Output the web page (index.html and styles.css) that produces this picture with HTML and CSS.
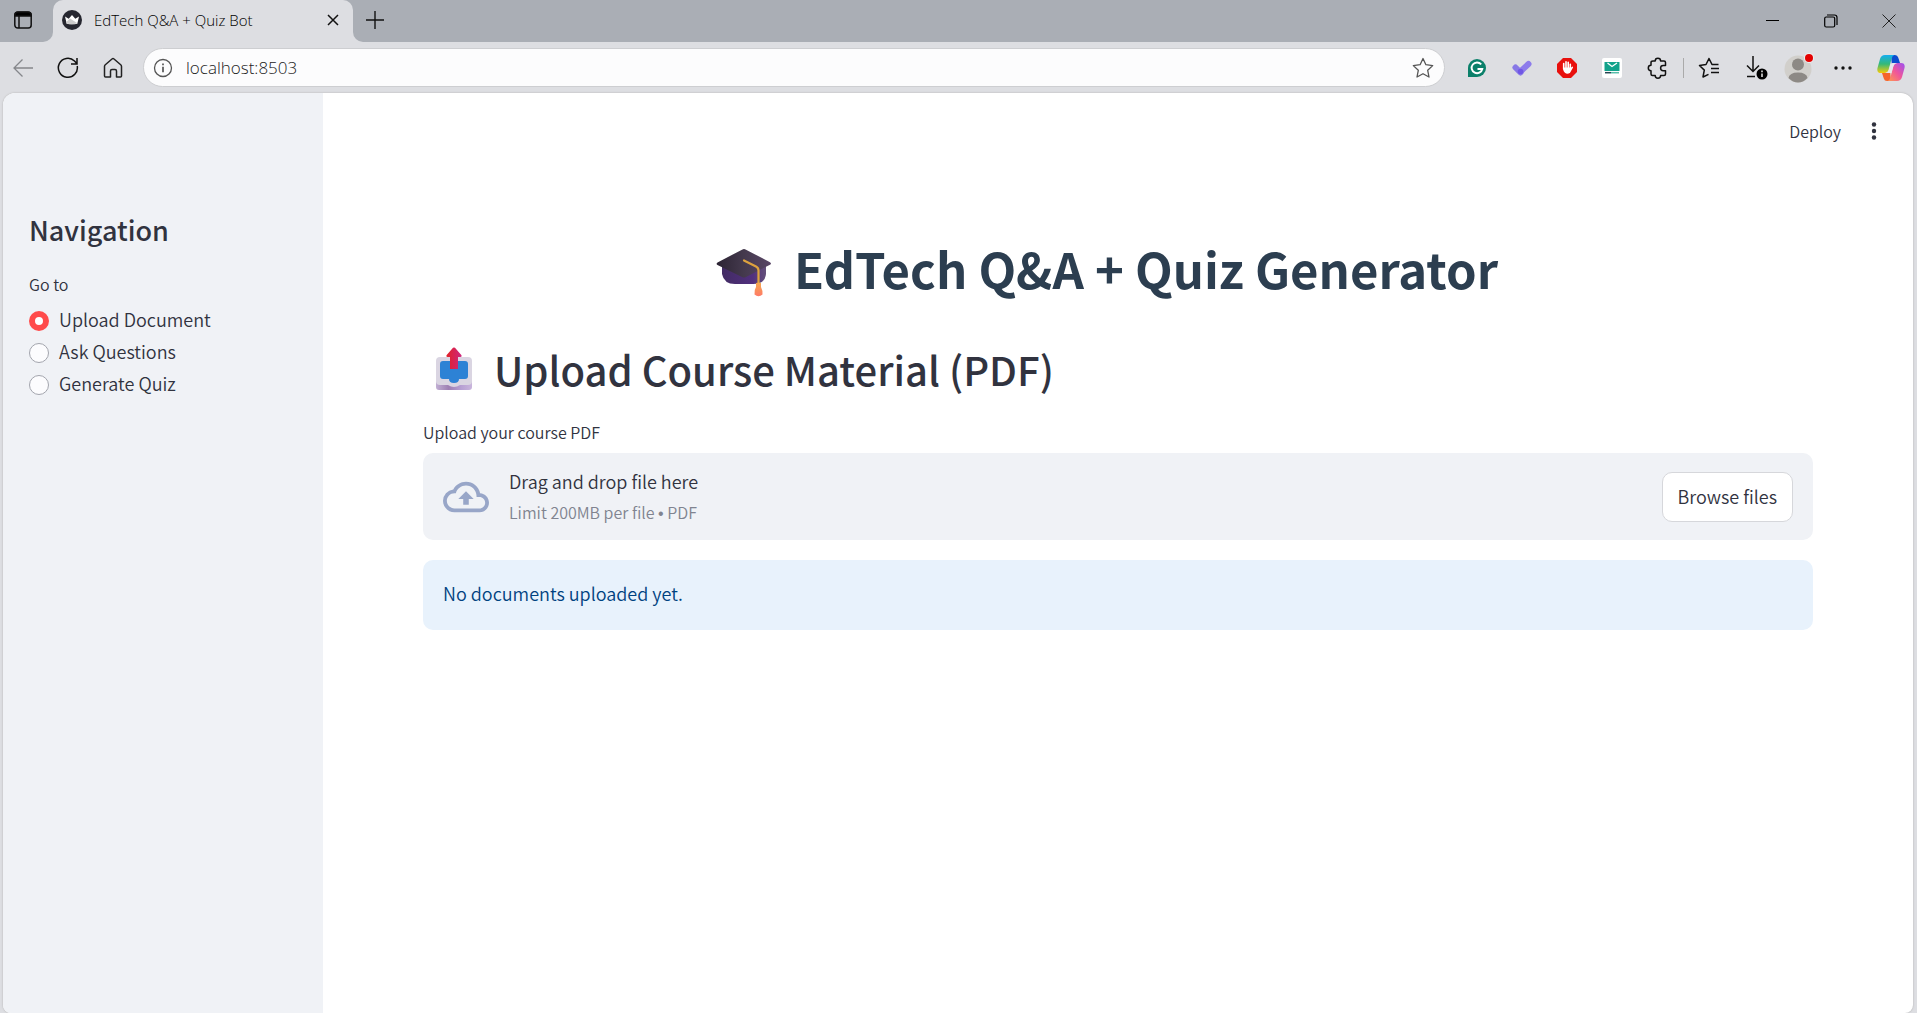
FILE: index.html
```html
<!DOCTYPE html>
<html lang="en">
<head>
<meta charset="utf-8">
<title>EdTech Q&amp;A + Quiz Bot</title>
<link rel="stylesheet" href="styles.css">
</head>
<body>
<div class="browser">
  <div class="tabstrip">
    <button class="tab-actions" aria-label="Tab actions">
      <svg width="20" height="20" viewBox="0 0 20 20" fill="none" stroke="#111" stroke-width="1.5"><rect x="1.8" y="2.3" width="16.400" height="15.700" rx="3"/><path d="M6 6v12"/><path d="M2 6V5a3 3 0 0 1 3-3h10a3 3 0 0 1 3 3v1z" fill="#000"/></svg>
    </button>
    <div class="tab">
      <svg class="favicon" width="20" height="20" viewBox="0 0 20 20"><circle cx="10" cy="10" r="10" fill="#262730"/><path d="M3 6.500l3.700 2.200L10 5l3.300 3.700L17 6.500l-1.700 7.200q-5.300 1.300-10.600 0z" fill="#fff"/><path d="M4.300 12L8 8.500l7.500 4.800q-5 1.500-10.800.4z" fill="#ccc"/></svg>
      <span class="tab-title">EdTech Q&amp;A + Quiz Bot</span>
      <button class="icon-btn" aria-label="Close tab"><svg width="12" height="12" viewBox="0 0 12 12" stroke="#111" stroke-width="1.5"><path d="M1 1l10 10M11 1L1 11"/></svg></button>
    </div>
    <button class="icon-btn new-tab" aria-label="New tab"><svg width="18" height="18" viewBox="0 0 18 18" stroke="#111" stroke-width="1.400"><path d="M9 0v18M0 9h18"/></svg></button>
    <div class="window-controls">
      <button class="icon-btn" aria-label="Minimize"><svg width="14" height="14" viewBox="0 0 14 14" stroke="#000"><path d="M0 6.500h13"/></svg></button>
      <button class="icon-btn" aria-label="Restore"><svg width="14" height="14" viewBox="0 0 14 14" fill="none" stroke="#000" stroke-width="1.200"><rect x=".7" y="3" width="10" height="10" rx="1.500"/><path d="M3 1h7.500Q13 1 13 3.500V11"/></svg></button>
      <button class="icon-btn" aria-label="Close window"><svg width="14" height="14" viewBox="0 0 14 14" stroke="#222"><path d="M.5.500l13 13M13.500.500l-13 13"/></svg></button>
    </div>
  </div>

  <div class="toolbar">
    <div class="nav-buttons">
      <button class="icon-btn" aria-label="Back"><svg width="22" height="22" viewBox="0 0 22 22" fill="none" stroke="#85878b" stroke-width="1.300"><path d="M21 11H2M10.500 2.500L2 11l8.500 8.500"/></svg></button>
      <button class="icon-btn" aria-label="Refresh"><svg width="22" height="22" viewBox="0 0 22 22" fill="none" stroke="#111" stroke-width="1.500"><path d="M20.200 9A9.500 9.500 0 1 1 17.500 4l2.300 2.500M20 1v6h-6"/></svg></button>
      <button class="icon-btn" aria-label="Home"><svg width="22" height="22" viewBox="-1 0 22 22" fill="none" stroke="#222" stroke-width="1.500" stroke-linejoin="round"><path d="M1.500 9.500Q1.500 8.500 2.300 7.800L9 2q1-.8 2 0l6.700 5.800q.8.700.8 1.700V19q0 1-1 1h-4v-6q0-1.500-1.500-1.500H9Q7.500 12.500 7.500 14v6h-5q-1 0-1-1z"/></svg></button>
    </div>
    <div class="address">
      <svg width="20" height="20" viewBox="0 0 20 20"><circle cx="10" cy="10" r="8.500" fill="none" stroke="#555" stroke-width="1.300"/><path d="M10 8.800v5.500M10 5.500v1.800" stroke="#555" stroke-width="1.700"/></svg>
      <input class="address-input" type="text" aria-label="Address" value="localhost:8503">
      <button class="icon-btn" aria-label="Favorite this page"><svg width="22" height="22" viewBox="0 0 22 22" fill="none" stroke="#555" stroke-width="1.300" stroke-linejoin="round"><path d="M11 1.500l2.900 6.200 6.800.9-5 4.700 1.300 6.700-6-3.300L5 20l1.300-6.700-5-4.700 6.800-.9z"/></svg></button>
    </div>
    <div class="extensions">
      <button class="icon-btn" aria-label="Grammar checker"><svg width="20" height="20" viewBox="0 0 20 20"><path d="M1 19V10a9 9 0 1 1 9 9z" fill="#0b806a"/><path d="M14.200 6.400A5.400 5.400 0 1 0 15.300 11H10.500" fill="none" stroke="#fff" stroke-width="1.900"/></svg></button>
      <button class="icon-btn" aria-label="Tasks"><svg width="20" height="20" viewBox="0 0 20 20" stroke-linecap="round" stroke-width="6"><path d="M3.500 9.500l5 5" stroke="#8778e6"/><path d="M8.500 13.500L16.500 6" stroke="#8d7ceb"/><circle cx="8.500" cy="13.500" r="2.800" fill="#7057e5"/></svg></button>
      <button class="icon-btn" aria-label="Ad blocker"><svg width="20" height="20" viewBox="0 0 20 20"><path d="M6 0h8l6 6v8l-6 6H6l-6-6V6z" fill="#e8100d"/><path d="M6.700 11V5.600M9 10V3.800M11.200 10V4.300M13.300 11V6.300" stroke="#fff" stroke-width="1.600" stroke-linecap="round"/><path d="M6 9.500h8.200l1.200-1q1 .3.500 1.200l-3 5.300q-2.800 1.700-5-.2Q6 13 6 9.500z" fill="#fff"/></svg></button>
      <button class="icon-btn" aria-label="Temporary mail"><svg width="20" height="20" viewBox="0 0 20 20"><rect width="20" height="20" rx="2" fill="#fff"/><path d="M2.500 4h15v9h-15z" fill="#12a28b"/><path d="M5.500 5l4.500 3.500L15 5" fill="none" stroke="#fff" stroke-width="1.300"/><path d="M3 14.700h6" stroke="#264653" stroke-width="1.500"/><path d="M9 14.700h8" stroke="#58bdaa" stroke-width="1.500"/></svg></button>
      <button class="icon-btn" aria-label="Extensions"><svg width="22" height="22" viewBox="0 0 22 22" fill="none" stroke="#111" stroke-width="1.500" stroke-linejoin="round"><path d="M6 4h2.200a2.700 2.700 0 0 1 5.400 0H17q1.500 0 1.500 1.500V8.500h-2.300a2.600 2.600 0 0 0 0 5.200h2.300V17q0 1.500-1.500 1.500h-3.400a2.700 2.700 0 0 1-5.400 0H5.500Q4 18.500 4 17v-3.300a2.700 2.700 0 0 1 0-5.400V5.500Q4 4 6 4z"/></svg></button>
      <span class="separator"></span>
      <button class="icon-btn" aria-label="Favorites"><svg width="22" height="22" viewBox="0 0 22 22" fill="none" stroke="#111" stroke-width="1.500" stroke-linejoin="round"><path d="M20.500 7.500h-6.500L11 1.500 8 7.500l-6.500 1 4.800 4.600L5 20l5.500-2.600M13 11.500h8M13 15.500h8"/></svg></button>
      <button class="icon-btn" aria-label="Downloads"><svg width="24" height="26" viewBox="0 0 24 26" fill="none" stroke="#111" stroke-width="1.500"><path d="M8 1v15M2 10.500l6 6 6-6M2 21.500h8"/><circle cx="17" cy="19" r="5.500" fill="#000" stroke="none"/><path d="M17 18.500v3.500M17 15.500v1.700" stroke="#ddd" stroke-width="1.600"/></svg></button>
      <button class="icon-btn profile" aria-label="Profile"><svg width="30" height="30" viewBox="0 0 30 30"><circle cx="14" cy="16" r="13.500" fill="#d1cfcb"/><circle cx="14" cy="11.500" r="6" fill="#8d8985"/><path d="M4.500 25Q5.500 19.500 14 19.500t9.500 5.500Q19 29.500 14 29.500T4.500 25z" fill="#8d8985"/><circle cx="25" cy="5" r="5" fill="#eee"/><circle cx="25" cy="5" r="4" fill="#e30000"/></svg></button>
      <button class="icon-btn" aria-label="Settings and more"><svg width="18" height="6" viewBox="0 0 18 6" fill="#111"><circle cx="2" cy="3" r="1.700"/><circle cx="9" cy="3" r="1.700"/><circle cx="16" cy="3" r="1.700"/></svg></button>
      <button class="icon-btn" aria-label="Copilot"><svg width="28" height="26" viewBox="0 0 28 26"><defs><linearGradient id="ca" x1="0" y1="0" x2="0" y2="1"><stop offset="0" stop-color="#14aef0"/><stop offset=".5" stop-color="#35b979"/><stop offset="1" stop-color="#f5cc08"/></linearGradient><linearGradient id="cb" x1="1" y1="0" x2="0" y2="1"><stop offset="0" stop-color="#9b50f2"/><stop offset=".5" stop-color="#f0569a"/><stop offset="1" stop-color="#ff9b4d"/></linearGradient></defs><path d="M14 0h4q2.500 0 3.200 2.500L23 8h-4q-3 0-4 3z" fill="#0b4ccf"/><path d="M14 26h-4q-2.500 0-3.200-2.500L5 18h4q3 0 4-3z" fill="#f5642c"/><path d="M8 0h9.500q-2.300.7-3 4l-3 11q-1 3-4 3H4q-4.500 0-3.500-5L3 4q1.200-4 5-4z" fill="url(#ca)"/><path d="M20 26h-9.500q2.300-.7 3-4l3-11q1-3 4-3H24q4.500 0 3.500 5L25 22q-1.200 4-5 4z" fill="url(#cb)"/><path d="M15.500 8H20q-2.800.4-3.600 3l-2 7H8.500q2.500-.5 3.300-3l1.500-5Q14 8 15.500 8z" fill="#e8e6ec"/></svg></button>
    </div>
  </div>

  <div class="page">
    <aside class="sidebar">
      <h2 class="sidebar-title">Navigation</h2>
      <fieldset class="nav-group">
        <legend class="field-label">Go to</legend>
        <label class="nav-option"><input type="radio" name="nav" checked><span>Upload Document</span></label>
        <label class="nav-option"><input type="radio" name="nav"><span>Ask Questions</span></label>
        <label class="nav-option"><input type="radio" name="nav"><span>Generate Quiz</span></label>
      </fieldset>
    </aside>
    <main class="main">
      <header class="app-header">
        <button class="deploy">Deploy</button>
        <button class="icon-btn" aria-label="Main menu"><svg width="6" height="18" viewBox="0 0 6 18" fill="#31333f"><circle cx="3" cy="2.500" r="2.200"/><circle cx="3" cy="9" r="2.200"/><circle cx="3" cy="15.500" r="2.200"/></svg></button>
      </header>
      <div class="content">
        <h1 class="title">
          <svg width="56" height="50" viewBox="0 0 56 50"><defs><linearGradient id="board" x1="0" y1="0" x2="1" y2="0"><stop offset="0" stop-color="#2c2433"/><stop offset=".5" stop-color="#44394d"/><stop offset="1" stop-color="#5a4767"/></linearGradient><linearGradient id="cap" x1="0" y1="0" x2="1" y2="0"><stop offset="0" stop-color="#422b63"/><stop offset=".7" stop-color="#51307e"/><stop offset="1" stop-color="#65517a"/></linearGradient><linearGradient id="tassel" x1="0" y1="0" x2="0" y2="1"><stop offset="0" stop-color="#f4a94e"/><stop offset="1" stop-color="#ff7a68"/></linearGradient></defs><path d="M6 14h44v12q-1 10-13 10H19Q8 36 6 26z" fill="url(#cap)"/><path d="M26 1.700q2-1.200 4 0l24 12.500q2 1.300 0 2.600L30 29q-2 1-4 0L1.500 17q-1.800-1.300 0-2.600z" fill="url(#board)"/><path d="M28 12.500l12 6q2.500 1.300 2.500 4V37" fill="none" stroke="#dda23e" stroke-width="2.200" stroke-linecap="round"/><path d="M40 35q2.500-1 5 0v4q2 4 1.500 7.500-4 3.500-8 0Q38 42 40 39z" fill="url(#tassel)"/></svg>
          <span>EdTech Q&amp;A + Quiz Generator</span>
        </h1>
        <h2 class="section-title">
          <svg width="36" height="44" viewBox="0 0 36 44"><defs><linearGradient id="base" x1="0" y1="0" x2="1" y2="0"><stop offset="0" stop-color="#c1afd3"/><stop offset=".35" stop-color="#9e7fb3"/><stop offset=".7" stop-color="#b7a0d3"/><stop offset="1" stop-color="#c9b5dc"/></linearGradient><linearGradient id="arrow" x1="0" y1="0" x2="1" y2="0"><stop offset="0" stop-color="#e22127"/><stop offset="1" stop-color="#cd277f"/></linearGradient></defs><path d="M0 30h36v10q0 3-3 3H3q-3 0-3-3z" fill="url(#base)"/><rect y="10" width="36" height="28" rx="4" fill="#dad5e2"/><path d="M12 35h12v3q-6 4-12 0z" fill="#dad5e2"/><path d="M7 14h22q3 0 3 3v12q0 3-3 3h-6q0 4-5 4t-5-4H7q-3 0-3-3V17q0-3 3-3z" fill="#2d82d5"/><path d="M17 .8q1-.8 2 0l6.500 7.500q.7 1.400-1 1.700H22v12h-8V10h-2.500q-1.700-.3-1-1.700z" fill="url(#arrow)"/></svg>
          <span>Upload Course Material (PDF)</span>
        </h2>
        <p class="field-label">Upload your course PDF</p>
        <section class="dropzone">
          <svg width="46" height="46" viewBox="0 0 24 24" fill="#98a6c8"><path d="M19.350 10.040A7.490 7.490 0 0 0 12 4C9.110 4 6.600 5.640 5.350 8.040A5.994 5.994 0 0 0 0 14c0 3.310 2.690 6 6 6h13c2.760 0 5-2.240 5-5 0-2.640-2.050-4.780-4.650-4.960zM19 18H6c-2.210 0-4-1.790-4-4s1.790-4 4-4h.710C7.370 7.690 9.480 6 12 6c3.040 0 5.500 2.460 5.500 5.500v.5H19c1.660 0 3 1.340 3 3s-1.340 3-3 3zM8 13h2.550v3h2.900v-3H16l-4-4z"/></svg>
          <div class="drop-text">
            <span>Drag and drop file here</span>
            <small>Limit 200MB per file <span class="dot">•</span> PDF</small>
          </div>
          <button class="browse">Browse files</button>
        </section>
        <div class="notice" role="status">No documents uploaded yet.</div>
      </div>
    </main>
  </div>
</div>
</body>
</html>
```
FILE: styles.css
```css
* { box-sizing: border-box; }

body {
  margin: 0;
  background: #dddee2;
  color: #31333f;
  font-family: "Noto Sans CJK SC", "Noto Sans", sans-serif;
  font-size: 18px;
  font-weight: 350;
}

h1, h2, p { margin: 0; }

button {
  padding: 0;
  border: 0;
  background: none;
  color: inherit;
  font: inherit;
}

svg { display: block; flex: none; }

.browser {
  display: flex;
  flex-direction: column;
  min-height: 100vh;
}

.icon-btn {
  display: flex;
  align-items: center;
  justify-content: center;
}

/* Tab strip */
.tabstrip {
  display: flex;
  height: 42px;
  background: #dddee2;
}

.tab-actions {
  width: 53px;
  padding: 0 0 2px 13px;
  background: #aaaeb5;
  border-bottom-right-radius: 10px;
}

.tab {
  display: flex;
  align-items: center;
  gap: 12px;
  width: 300px;
  padding: 0 14px 2px 9px;
  background: linear-gradient(#aaaeb5, #aaaeb5) top / 100% 12px no-repeat;
  position: relative;
  isolation: isolate;
}

.tab::before {
  content: "";
  position: absolute;
  inset: 0;
  z-index: -1;
  border-radius: 10px 10px 0 0;
  background: #dddee2;
}

.tab-title {
  flex: 1;
  color: #000;
  font-family: "Open Sans", sans-serif;
  font-size: 15px;
}

.new-tab {
  padding: 0 0 3px 13px;
  background: #aaaeb5;
  border-bottom-left-radius: 10px;
}

.window-controls {
  display: flex;
  flex: 1;
  justify-content: flex-end;
  gap: 44px;
  padding-right: 21px;
  background: #aaaeb5;
}

/* Toolbar */
.toolbar {
  display: flex;
  align-items: center;
  height: 51px;
  padding: 0 12px 0 12px;
}

.nav-buttons {
  display: flex;
  gap: 23px;
  width: 131px;
}

.address {
  display: flex;
  flex: 1;
  align-items: center;
  gap: 13px;
  height: 39px;
  padding: 0 10px 0 9px;
  border: 1px solid #cdced1;
  border-radius: 20px;
  background: #fcfcfd;
}

.address-input {
  flex: 1;
  min-width: 0;
  padding: 0;
  border: 0;
  outline: 0;
  background: none;
  color: #222;
  font-family: "Open Sans", sans-serif;
  font-size: 17px;
  font-weight: 350;
}

.extensions {
  display: flex;
  align-items: center;
  gap: 25px;
  padding-left: 22px;
}

.separator {
  width: 1px;
  height: 20px;
  margin: 0 -11px;
  background: #aaa;
}

.profile { margin: 0 -5px 0 -10px; }

/* App */
.page {
  display: flex;
  flex: 1;
  margin: 0 4px 0 3px;
  overflow: hidden;
  border-radius: 12px 12px 8px 8px;
  background: #fff;
  box-shadow: 0 0 2px #aaa;
}

.sidebar {
  flex: none;
  width: 320px;
  padding: 119px 26px 0;
  background: #f0f2f6;
}

.sidebar-title {
  margin-bottom: 24px;
  font-size: 27px;
  font-weight: 500;
  line-height: 36px;
}

.nav-group {
  margin: 0;
  padding: 0;
  border: 0;
}

.field-label {
  padding: 0;
  font-size: 16px;
  line-height: 24px;
}

.nav-group .field-label { margin-bottom: 9px; }

.nav-option {
  display: flex;
  gap: 10px;
  height: 32px;
  line-height: 28px;
}

.nav-option input {
  appearance: none;
  width: 20px;
  height: 20px;
  margin: 6px 0 0;
  border: 1px solid #a3a5ad;
  border-radius: 50%;
  background: #fcfcfe;
}

.nav-option input:checked {
  border: 6px solid #ff4b4b;
  background: #fff;
}

.main { flex: 1; min-width: 0; }

.app-header {
  display: flex;
  justify-content: flex-end;
  gap: 30px;
  height: 75px;
  padding-right: 36px;
}

.deploy { font-size: 16px; }

.content { padding: 67px 100px 40px; }

.title {
  display: flex;
  align-items: center;
  justify-content: center;
  gap: 22px;
  margin-bottom: 41px;
  padding-right: 22px;
  color: #2c3e50;
  font-size: 49px;
  font-weight: 700;
  line-height: 66px;
}

.title svg { margin-top: 10px; }

.section-title {
  display: flex;
  align-items: center;
  gap: 22px;
  margin-bottom: 24px;
  padding-left: 13px;
  font-size: 40px;
  font-weight: 500;
  line-height: 54px;
}

.dropzone {
  display: flex;
  align-items: center;
  gap: 20px;
  min-height: 85px;
  margin: 9px 0 20px;
  padding: 14px 20px;
  border-radius: 10px;
  background: #f0f2f6;
}

.drop-text {
  display: flex;
  flex: 1;
  flex-direction: column;
  gap: 5px;
  line-height: 28px;
}

.drop-text small {
  color: #808490;
  font-size: 16px;
  line-height: 24px;
}

.dot { font-family: "Liberation Sans", sans-serif; }

.browse {
  height: 50px;
  padding: 0 15px 2px;
  border: 1px solid #d6d7db;
  border-radius: 10px;
  background: #fff;
}

.notice {
  padding: 18px 20px 22px;
  border-radius: 10px;
  background: #e8f2fc;
  color: #004280;
  line-height: 30px;
}
```
